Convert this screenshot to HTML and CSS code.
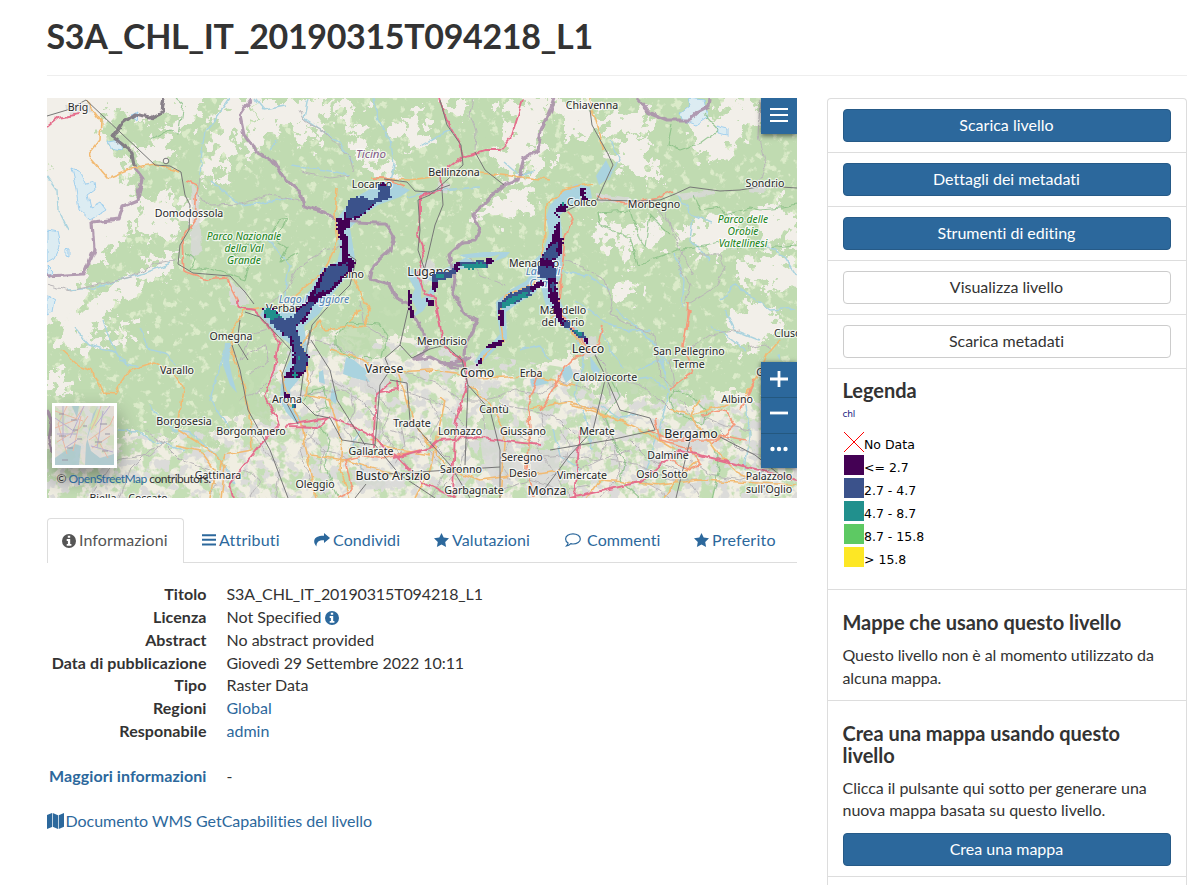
FILE: index.html
```html
<!DOCTYPE html>
<html lang="it">
<head>
<meta charset="utf-8">
<title>S3A_CHL_IT_20190315T094218_L1</title>
<link rel="stylesheet" href="styles.css">
</head>
<body>
<svg width="0" height="0" class="defs">
  <symbol id="i-info" viewBox="0 0 14 14"><path fill="currentColor" fill-rule="evenodd" d="M7 0a7 7 0 1 0 0 14A7 7 0 0 0 7 0zM5.8 1.8h2.4v2H5.8zM4.7 5h3.5v4.9h1.2v1.9H4.7V9.900h1.200V6.900H4.700z"/></symbol>
  <symbol id="i-star" viewBox="0 0 15 14"><path fill="currentColor" d="M7.500 0l2.200 4.600 5.300.7-3.800 3.600.9 5.100-4.600-2.500L2.900 14l.9-5.100L0 5.300l5.300-.7z"/></symbol>
</svg>
<div class="page">
  <h2 class="title">S3A_CHL_IT_20190315T094218_L1</h2>
  <div class="columns">
    <main class="main">
      <div class="map">
        <svg class="map-canvas" viewBox="47 98 750 400" width="750" height="400">
          <defs>
            <filter id="rough" x="-10%" y="-10%" width="120%" height="120%" color-interpolation-filters="sRGB"><feTurbulence type="fractalNoise" baseFrequency=".08" numOctaves="4" seed="4"/><feDisplacementMap in="SourceGraphic" scale="44" xChannelSelector="R" yChannelSelector="G"/></filter>
            <filter id="wiggle" filterUnits="userSpaceOnUse" x="40" y="90" width="765" height="415" color-interpolation-filters="sRGB"><feTurbulence type="fractalNoise" baseFrequency=".1" numOctaves="2" seed="9"/><feDisplacementMap in="SourceGraphic" scale="6" xChannelSelector="R" yChannelSelector="G"/></filter>
            <filter id="patches" x="0" y="0" width="100%" height="100%" color-interpolation-filters="sRGB"><feTurbulence type="fractalNoise" baseFrequency=".07" numOctaves="4" seed="12"/><feColorMatrix values="0 0 0 0 .77  0 0 0 0 .87  0 0 0 0 .71  10 0 0 0 -4.700"/><feComposite in2="SourceGraphic" operator="in"/></filter>
            <filter id="towns" x="0" y="0" width="100%" height="100%" color-interpolation-filters="sRGB"><feTurbulence type="fractalNoise" baseFrequency=".1" numOctaves="3" seed="31"/><feColorMatrix values="0 0 0 0 .86  0 0 0 0 .86  0 0 0 0 .85  12 0 0 0 -6.400"/><feComposite in2="SourceGraphic" operator="in"/></filter>
            <filter id="meadow" x="0" y="0" width="100%" height="100%" color-interpolation-filters="sRGB"><feTurbulence type="fractalNoise" baseFrequency=".11" numOctaves="4" seed="22"/><feColorMatrix values="0 0 0 0 .86  0 0 0 0 .92  0 0 0 0 .79  8 0 0 0 -4.700"/><feComposite in2="SourceGraphic" operator="in"/></filter>
          </defs>
          <rect x="47" y="98" width="750" height="400" fill="#c0dbb1"/>
          <rect x="47" y="98" width="750" height="400" filter="url(#meadow)"/>
          <g fill="#f2efe9" filter="url(#rough)">
            <path d="M30 80H170L163 115 145 125 120 108 104 122 108 140 122 160 132 188 105 205 90 230 65 210 48 165 30 180Z"/>
            <path d="M30 165L62 170 92 200 120 180 142 190 137 225 107 255 85 280 78 312 30 330Z"/>
            <path d="M135 150L152 135 175 145 160 165 140 168ZM165 190L182 212 179 235 150 238 140 210ZM92 295L118 280 149 262 168 255 175 268 146 285 122 298 100 312ZM172 210L195 194 205 212 190 226Z"/>
            <path d="M155 95H210L200 118 180 130 160 118ZM225 95H262L248 120 235 150 220 175 207 186 205 160 217 125ZM260 100H292L277 130 250 160 244 143Z"/>
            <path d="M285 100H330L325 125 300 130 282 120ZM342 98L360 108 358 132 338 120ZM300 130L315 138 308 150 293 142ZM350 130L370 145 368 160 351 150ZM398 113L420 115 430 140 410 148 395 135ZM355 170L380 160 400 170 380 178ZM440 100H470L460 120 448 115ZM500 100L542 98 541 130 525 160 513 182 490 170 500 150 512 130ZM470 215L495 198 530 192 533 208 508 222 485 216Z"/>
            <path d="M550 100H590L600 115 625 116 652 111 655 124 632 136 606 128 592 144 570 134ZM615 145L645 135 648 160 665 180 640 180 622 170ZM690 125L725 114 752 95 740 140 715 160 696 162ZM560 95L540 118 532 110 545 95ZM528 150L553 150 541 173 524 180ZM720 98L765 100 760 122 730 120Z"/>
            <path d="M620 238L650 215 665 226 660 250 635 245 625 270ZM680 235L700 216 725 215 750 228 738 248 700 255ZM750 210L775 204 797 220 791 248 765 242ZM735 260L775 254 797 262V292L765 290 735 275ZM725 330L750 300 780 310 771 340 743 350ZM590 215L612 220 622 245 602 248ZM618 285L637 282 635 298 616 297Z"/>
            <path d="M60 318L105 302 114 320 92 333 112 345 83 352 63 346ZM48 365L72 380 62 398 48 394ZM120 320L140 330 121 348Z"/>
          </g>
          <path d="M47 520V435L100 440 145 430 170 438 205 445 230 420 265 408 280 370 300 330 340 336 375 325 425 345 450 372 475 370 490 380 530 374 575 350 590 385 620 395 660 395 690 405 730 395 830 408V520Z" fill="#f0eee2" filter="url(#rough)"/>
          <path d="M47 450L145 435 230 425 300 330 425 345 580 370 797 410V498H47Z" filter="url(#patches)"/>
          <path d="M47 450L145 435 230 425 300 335 425 345 580 370 797 410V498H47Z" filter="url(#towns)"/>
          <g fill="#bfdbb0" opacity=".8"><path d="M225 380L255 375 280 415 247 425 215 420ZM335 335L355 325 380 325 385 352 350 356 335 347ZM310 335L340 320 380 290 420 300 420 330 375 345ZM485 395L505 405 500 450 482 430ZM575 360L650 350 690 390 650 400 600 390Z" filter="url(#rough)"/></g>
          <g fill="#dcecf2" stroke="#8fc8ee" stroke-width=".8" filter="url(#wiggle)">
            <path d="M71 168L80 172 86 184 94 182 95 190 88 195 91 207 100 202 106 210 90 220 79 210 76 190ZM47 230L57 232 60 245 54 258 47 262ZM47 265L54 272 49 278ZM107 142L120 140 123 150 110 148ZM47 295L55 300 53 312 47 315ZM130 115L138 112 136 120ZM680 113L690 105 688 98 704 100 708 118 697 125 683 120ZM716 125L728 128 728 136 717 134ZM66 248l3 1 0 8-3-1Z"/>
          </g>
          <g fill="#d9d9d8" opacity=".85" filter="url(#wiggle)">
            <path d="M66 105L90 103 93 112 70 114ZM190 180L199 195 202 250 190 260 193 210ZM230 280L246 292 250 305 230 305ZM360 360L380 362 390 380 378 398 360 390ZM418 270L430 258 438 275 425 285ZM438 180L450 185 446 194 434 192ZM465 368L478 364 482 390 464 388ZM660 430L690 428 714 440 700 453 675 449ZM350 470L380 468 395 488 360 490ZM480 430L505 430 525 470 496 490 484 462ZM530 450L560 450 560 498 530 494ZM580 340L596 336 598 355 584 358ZM596 192L640 200 640 206 596 201ZM675 194L715 190 715 194 685 199ZM750 182L768 184 762 194 749 192Z"/>
          </g>
          <g fill="#aad3df">
            <path d="M396 184L388 181 377 185 358 196 346 207 336 220 337 235 340 251 337 262 322 268 311 289 298 304 282 312 266 305 260 315 278 335 290 344 291 358 284 372 281 386 280 400 286 412 298 425 301 418 292 406 290 390 300 378 309 360 307 345 304 326 319 314 331 296 343 281 354 270 355 258 352 240 350 228 362 216 378 205 400 197 410 190Z"/>
            <path d="M606 160L612 172 606 180 599 185 596 176 603 165ZM590 187L576 184 563 192 550 205 546 217 549 233 543 252 532 262 531 273 526 281 510 290 496 302 497 315 500 334 492 343 482 351 474 362 480 365 497 347 507 339 506 312 514 306 536 292 540 282 544 299 548 312 560 324 575 335 586 345 591 348 586 336 570 322 561 303 557 285 562 272 563 250 562 232 560 215 571 205 592 198Z"/>
            <path d="M407 275L415 289 411 298 417 310 411 319 423 311 432 297 437 289 434 283 426 296 421 299 421 285 412 268ZM424 278L436 283 455 270 480 267 492 264 500 254 490 257 465 258 446 268ZM459 255L484 252 510 252 506 257 484 265Z"/>
            <path d="M225 343L231 343 229 361 232 376 237 393 230 385 223 365ZM346 357L354 360 362 367 370 371 365 375 370 382 354 378 343 374ZM319 372L323 370 325 384 319 382ZM332 388L337 395 336 404 330 400ZM530 379L541 377 549 383 532 387ZM560 370L570 365 574 376 566 383ZM590 356L600 370 597 377 591 369ZM777 355L780 354 780 360Z"/>
          </g>
          <g class="river">
            <path d="M230 98L215 120 205 132 202 150 200 175M270 150L278 140M255 98L265 110 285 106M308 98L304 118 325 132 338 142 353 163M290 165L325 170 350 175M373 98L378 120 390 140 394 165 390 180M420 147L440 135 455 128M47 176L57 190 58 210 68 230M68 290L95 288 118 280 145 273 171 263M75 328L90 345 115 352 130 365M103 320L110 340 120 360 140 367M140 327L150 350 165 353 177 365M118 430L138 431 150 440 185 450M150 405L160 420 175 430 190 432 210 450 225 465 235 485M210 180L240 205 292 198M267 240L290 265 283 300M610 140L620 160 608 180M678 196L692 215 712 222M693 220L690 240 710 260M675 253L684 282 682 306M616 310L640 330 660 350 665 375M577 336L584 365 573 395 585 415 592 450M553 430L560 455 580 470M638 370L660 360 669 390 660 430 645 470M560 270L590 277 610 290M720 300L735 285 770 310 797 308M360 430L353 445 367 480M225 350L210 400 230 430M407 198L440 190 480 187M535 170L520 176 505 163M550 360L540 345 520 350M758 240L784 256 797 276"/>
            <path d="M574 300L590 310 607 323 630 331 650 330M600 330L610 350 623 367M635 325L650 340 670 365M627 380L650 377 665 390M600 405L620 418 638 415M710 325L725 335 745 350M725 310L735 330 760 340M745 398L750 435 745 470M774 440L765 455 760 480"/>
          </g>
          <g class="minor">
            <path d="M200 178L197 196 212 205 240 204 270 195 300 201M47 285L70 291 100 284 130 277 155 264 175 261M173 440L150 450 130 470 120 498M145 430L165 445 180 460 210 470M165 442L150 455 115 460 90 498M205 470L215 485 210 498M245 470L260 480 250 498M268 330L250 335 240 360 265 345 268 360 250 375M285 405L300 395 340 390 360 400 380 420 380 450M300 350L315 340 335 345 355 355M315 370L305 390 320 410 315 430 300 450 310 480 330 498M330 380L350 390 355 410 345 430 360 450M365 380L390 410 382 430 410 470 430 480M400 390L430 400 440 420 430 440 450 460M400 370L440 385 460 400 480 400 485 430M430 398L450 410 470 430 460 470 430 498M485 400L515 390 540 395 560 380 590 390M500 405L530 410 560 420 580 440M500 430L530 440 550 465 570 498M560 400L600 410 610 430 600 460 580 470M520 460L560 455 600 460 630 450M590 430L615 440 620 475 600 498M620 380L640 385 660 400 670 410M610 395L605 365 590 350M560 258L580 266 605 280 612 302 610 315 630 325 655 335 660 375 675 388 670 360 697 344 710 335 740 330M748 348L765 345 772 350M683 250L677 265 690 285 685 304M700 255L720 255 725 270 712 290 690 303M665 210L673 235 680 250 694 275M760 100L758 135 765 165 757 185M680 400L700 430 730 440M630 440L650 460 680 470 700 498M690 460L710 475 740 480 770 470M720 430L740 450 780 460 797 440M610 460L640 465 670 480 700 480"/>
            <path d="M390 430L420 440 445 470 430 498M500 490L530 480 560 490 590 485M700 415L725 425 750 430M300 110L305 120 325 132 350 158 354 173M350 175L330 178 300 172M505 285L480 275 470 258M360 300L365 325 390 340M650 200L670 225 680 240M345 245L325 250 300 265 285 290 266 310M473 98L470 115 476 132 475 150M240 400L260 390 275 375M250 430L265 450 280 470 275 498M320 450L340 455 365 470M400 420L405 445 395 465M510 440L500 460 510 480M540 410L545 430 535 445M640 480L660 490 670 498M560 430L570 445 560 470 545 480M305 432L325 450 320 470"/>
          </g>
          <g class="green"><path d="M185 252L195 260 190 270 208 268 230 275 245 280 250 262 235 255 245 245 268 240 279 220 287 218 275 240 287 248 280 262 298 252M150 140L170 130 178 135 183 105 175 98M672 125L668 145 680 150 700 143 718 130 705 115M598 212L600 225 630 238 638 265 650 260 678 250 720 242M598 212L630 210 640 240 645 247 650 215 670 235M694 195L700 210 720 207 725 215 750 208 760 210 782 208 797 205M730 248L765 248 797 245M335 337L350 322 380 324 387 335 382 357 350 358 335 345ZM303 400L313 390 323 388 328 408 313 412M318 425L330 440 325 465 338 498M613 382L620 395 605 415 613 440 625 460 620 480 640 498M669 400L675 390 690 395 705 410 702 425 675 412ZM715 450L720 470 712 498"/></g>
          <g class="border">
            <path d="M134 167L142 178 138 200 123 206 119 219 92 222 94 250 84 274 47 276M252 98L240 116 244 135 257 152 275 163 285 180 300 192 304 206 325 212 337 221 375 223 386 223 394 237 390 250 373 265 370 279 389 285 396 298 407 303 415 318 423 332 428 348 415 360 430 357 442 363 455 362 470 357 461 365 448 363 452 368 459 368M459 300L452 295 455 280 449 255 463 242 475 241 480 228 474 213 505 184 518 180 524 158 538 151 541 130 550 110 554 98M636 98L650 113 667 120 690 120 697 113 709 107 710 98M459 300L464 315 477 320 472 334 465 343 464 357M47 410L52 422 49 440 53 455"/>
            <path class="ridge" d="M164 98L162 112 150 118 134 115 123 123 113 137 132 152 134 167"/>
          </g>
          <g class="road">
            <path d="M86 100L101 120 100 140 88 155 108 178 130 169 155 165 180 172M371 178L410 180 470 172 550 180M61 350L78 365 92 370 102 392 115 393 130 370 155 362 170 370 183 388 178 430 205 447 225 465 221 498M263 307L245 310 232 330 230 347 240 375 250 415 252 450 225 455 220 470M337 187L335 215 338 240 325 270 292 298 268 312M346 260L362 297 370 310 365 325 325 330 320 320 302 345 308 375 305 395 330 400 342 440 340 470 350 498M330 350L360 358 370 365 398 372 430 370 480 378 530 376 575 385M398 372L415 425 450 470 480 480 560 470M470 386L490 405 505 430 500 498M550 320L560 310 571 330 589 352M585 500L600 480 660 485 700 480 797 485M571 405L620 420 650 435 675 450M780 340L767 355 756 380 740 400 690 415 670 409M480 362L487 353 503 340 500 312 505 297 535 283 544 248 546 205 565 190 592 183M360 310L350 322M280 370L290 405 302 425 315 498M175 445L200 450 215 470 210 498M700 400L690 415 715 450 740 475 760 480M530 408L570 402 595 410 630 425M700 460L680 475 665 498M440 398L445 402 430 470 415 498M370 440L400 450 430 455M590 98L592 110 604 150M310 455L345 460 395 475"/>
          </g>
          <g class="trunk"><path d="M186 180L197 185 195 220 182 240 184 272 207 280 227 278 238 300 238 307M373 178L385 178 405 186M567 212L573 218 565 238 562 270 558 310 590 350 575 358 565 368 550 395 540 410M597 196L625 204 650 200 673 192M690 310L683 345 694 372 670 390M689 302L687 330M540 370L528 405 530 430 527 470 535 498M648 430L670 440 715 440 720 435 745 440M655 418L660 440 690 448 700 465 690 470 670 460M338 498L352 490 345 460 365 455 385 458 420 450M700 415L725 410 735 425 712 445M740 410L755 380M603 325L598 345 590 350"/></g>
          <g class="motorway"><path d="M47 127L58 118 80 114M439 98L447 120 460 143 463 157 440 175 442 190 420 197 420 215 418 235 424 255 418 275 425 295 435 298 441 330 445 347 465 363 467 385 455 425 453 498M463 157L485 150 500 150 512 135 523 100M238 300L239 307 254 310 268 325 279 342 275 370 264 396 280 425 260 445 240 470 230 485 233 498M290 427L316 428 330 416 370 435 395 455 420 480 455 498M285 426L327 418M390 383L376 395 373 450M380 393L398 390 397 380M393 458L430 448 440 440 480 437M570 498L640 482 680 450 740 465 797 480M580 430L575 498M540 445L480 438"/></g>
          <g class="rail">
            <path d="M47 116L67 110 86 100 155 165 170 166 181 172 185 195 190 205 189 230 180 245 178 264 193 273 230 276 245 292 254 304"/>
            <circle cx="166" cy="161" r="2.800"/>
            <path d="M384 179L407 182 415 191 430 192 450 185M442 190L443 205 435 225 428 255 423 275M440 100L447 125 461 145 463 165 447 180 430 195 418 200 420 230 418 250 424 268M475 152L485 170 504 185M347 254L356 260 350 285 325 310 312 325 308 345M311 340L330 370 337 400 365 445M310 330L305 360 300 400 315 415 330 418 342 440 375 445M385 358L400 345 412 358 430 349 445 345 462 360 468 385 490 410 500 450 500 498M400 345L408 310M385 358L390 370 380 385 375 445 400 475 435 498M390 380L407 383 410 420 450 465 470 498M468 385L465 465M370 475L450 470 500 467M366 484L355 498M232 345L240 370 248 410 270 450 288 498M595 355L605 375 620 410 650 418 655 430 610 440 550 450M605 380L593 430 570 455 540 495M676 498L690 440M720 437L755 455 780 475M564 212L582 203 597 200 640 201 660 200 675 194 690 187 720 191 740 190 765 186 797 188M590 110L592 125 608 154 613 165 597 200M240 320L237 342 248 360M245 312L260 317 277 335 291 350 282 375 285 400 298 424"/>
          </g>
          <g class="labels">
            <g class="water"><text x="314" y="303">Lago Maggiore</text><text x="543" y="275">Lago di</text><text x="543" y="287">Como</text></g>
            <text class="region" x="371" y="158">Ticino</text>
            <g class="park"><text x="244" y="240">Parco Nazionale</text><text x="244" y="252">della Val</text><text x="244" y="264">Grande</text><text x="743" y="223">Parco delle</text><text x="743" y="235">Orobie</text><text x="743" y="247">Valtellinesi</text></g>
            <g class="town">
              <text x="78" y="111">Brig</text><text x="592" y="109">Chiavenna</text><text x="189" y="217">Domodossola</text><text x="454" y="176">Bellinzona</text><text x="372" y="188">Locarno</text><text x="765" y="187">Sondrio</text><text x="654" y="208">Morbegno</text><text x="582" y="206">Colico</text><text x="534" y="267">Menaggio</text><text x="350" y="278">Luino</text><text x="288" y="312">Verbania</text><text x="231" y="340">Omegna</text><text x="177" y="374">Varallo</text><text x="184" y="425">Borgosesia</text><text x="251" y="435">Borgomanero</text><text x="287" y="403">Arona</text><text x="218" y="479">Gattinara</text><text x="103" y="502">Biella</text><text x="148" y="502">Cossato</text><text x="442" y="345">Mendrisio</text><text x="563" y="314">Mandello</text><text x="563" y="326">del Lario</text><text x="689" y="355">San Pellegrino</text><text x="689" y="368">Terme</text><text x="605" y="381">Calolziocorte</text><text x="531" y="377">Erba</text><text x="494" y="413">Cantù</text><text x="412" y="427">Tradate</text><text x="460" y="435">Lomazzo</text><text x="523" y="435">Giussano</text><text x="597" y="435">Merate</text><text x="371" y="455">Gallarate</text><text x="522" y="461">Seregno</text><text x="461" y="473">Saronno</text><text x="523" y="477">Desio</text><text x="582" y="479">Vimercate</text><text x="315" y="488">Oleggio</text><text x="474" y="494">Garbagnate</text><text x="737" y="403">Albino</text><text x="668" y="459">Dalmine</text><text x="662" y="478">Osio Sotto</text><text x="769" y="480">Palazzolo</text><text x="769" y="493">sull'Oglio</text><text x="794" y="337">Clusone</text><text x="782" y="376">Gazzaniga</text>
            </g>
            <g class="city"><text x="429" y="276">Lugano</text><text x="384" y="373">Varese</text><text x="477" y="377">Como</text><text x="588" y="353">Lecco</text><text x="691" y="438">Bergamo</text><text x="393" y="480">Busto Arsizio</text><text x="547" y="495">Monza</text></g>
          </g>
          <g id="raster" shape-rendering="crispEdges"></g>
        </svg>
        <button class="map-btn menu" aria-label="Menu"><svg width="18" height="14"><path d="M0 1h18M0 7h18M0 13h18" stroke="#fff" stroke-width="2"/></svg></button>
        <div class="zoom">
          <button class="map-btn" aria-label="Zoom in"><svg width="18" height="18"><path d="M0 9h18M9 1v16" stroke="#fff" stroke-width="2.800"/></svg></button>
          <button class="map-btn" aria-label="Zoom out"><svg width="18" height="18"><path d="M0 9h18" stroke="#fff" stroke-width="2.800"/></svg></button>
          <button class="map-btn" aria-label="Altro"><svg width="18" height="6" fill="#fff"><circle cx="2.500" cy="3" r="2.200"/><circle cx="9" cy="3" r="2.200"/><circle cx="15.500" cy="3" r="2.200"/></svg></button>
        </div>
        <div class="thumb">
          <svg width="59" height="59" viewBox="0 0 59 59">
            <rect width="59" height="59" fill="#e3dcd5"/>
            <rect width="59" height="59" filter="url(#patches)" opacity=".6"/>
            <rect width="59" height="59" filter="url(#towns)"/>
            <path d="M59 48L45 52 36 45 32 32 38 8 43 0 41 5 34 27 31 38 30 59H59ZM0 52L20 38 26 40 24 59H0ZM17 0L24 0 22 12Z" fill="#a9c8ce" opacity=".85"/>
            <path d="M38 24L46 8 43 3 35 20Z" fill="#d4dfad"/>
            <path d="M0 22L20 14 28 2M2 36L25 22 33 10M12 0L3 18 12 48M26 10L18 45M34 34L55 19 59 10M37 42L55 30M40 29L53 52M0 5L28 15M36 24L42 12 46 0" fill="none" stroke="#e9b8a3"/>
            <path d="M0 12L20 26M8 0V35M29 0L15 32M48 5L42 42M55 0L40 20M2 28H22M36 40L58 46M10 42L22 34" fill="none" stroke="#b9afd0"/>
            <path d="M4 8h5M16 14h6M4 30h7M18 24h5M45 18h7M40 36h7M12 42h6M47 45h6M7 54h6M28 20h4M50 28h5M22 33h5" stroke="#9995a4"/>
          </svg>
        </div>
        <div class="attribution">© <a>OpenStreetMap</a> contributors.</div>
      </div>
      <nav class="tabs">
        <a class="tab active"><svg class="ic" width="14" height="14"><use href="#i-info"/></svg>Informazioni</a>
        <a class="tab t2"><svg class="ic" width="14" height="12"><path d="M0 1.200h14M0 5.800h14M0 10.400h14" stroke="currentColor" stroke-width="2"/></svg>Attributi</a>
        <a class="tab t3"><svg class="ic" width="16" height="14" viewBox="0 0 16 14"><path fill="currentColor" d="M10 0l6 5-6 5V7.200C5.500 7 2.500 8.200 2.400 13.500 1 11.500 0 10 .2 8 .6 4.200 4.500 2.700 10 2.800z"/></svg>Condividi</a>
        <a class="tab t4"><svg class="ic" width="15" height="14"><use href="#i-star"/></svg>Valutazioni</a>
        <a class="tab t5"><svg class="ic" width="16" height="14" viewBox="0 0 16 14"><path fill="none" stroke="currentColor" stroke-width="1.200" d="M8 .9c4.100 0 7.300 2.200 7.300 5S12.100 11 8 11c-.8 0-1.500-.1-2.200-.3C4.600 12 3.200 12.900 1.500 13c.9-.9 1.500-1.800 1.600-3C1.500 9 .6 7.600.6 5.900.6 3.100 3.900.9 8 .9z"/></svg>Commenti</a>
        <a class="tab t6"><svg class="ic" width="15" height="14"><use href="#i-star"/></svg>Preferito</a>
      </nav>
      <dl class="info">
        <dt>Titolo</dt><dd class="name">S3A_CHL_IT_20190315T094218_L1</dd>
        <dt>Licenza</dt><dd>Not Specified <a><svg class="ic" width="14" height="14"><use href="#i-info"/></svg></a></dd>
        <dt>Abstract</dt><dd>No abstract provided</dd>
        <dt>Data di pubblicazione</dt><dd class="date">Giovedì 29 Settembre 2022 10:11</dd>
        <dt>Tipo</dt><dd>Raster Data</dd>
        <dt>Regioni</dt><dd><a>Global</a></dd>
        <dt>Responabile</dt><dd><a>admin</a></dd>
      </dl>
      <dl class="info more"><dt><a>Maggiori informazioni</a></dt><dd>-</dd></dl>
      <a class="wms"><svg width="17" height="16" viewBox="0 0 17 16"><path fill="currentColor" d="M0 2L5 0V14L0 16ZM5.700 0L11 2.200V16L5.700 13.800ZM11.700 2.200L17 0V13.800L11.700 16Z"/></svg>Documento WMS GetCapabilities del livello</a>
    </main>
    <aside class="side">
      <section class="item"><button class="btn primary">Scarica livello</button></section>
      <section class="item"><button class="btn primary">Dettagli dei metadati</button></section>
      <section class="item"><button class="btn primary">Strumenti di editing</button></section>
      <section class="item"><button class="btn">Visualizza livello</button></section>
      <section class="item"><button class="btn">Scarica metadati</button></section>
      <section class="item legend">
        <h4>Legenda</h4>
        <p class="layer">chl</p>
        <ul>
          <li><svg width="20" height="20"><path d="M0 0L20 20M20 0L0 20" stroke="red"/></svg><span>No Data</span></li>
          <li><i class="sw c1"></i><span>&lt;= 2.7</span></li>
          <li><i class="sw c2"></i><span>2.7 - 4.7</span></li>
          <li><i class="sw c3"></i><span>4.7 - 8.7</span></li>
          <li><i class="sw c4"></i><span>8.7 - 15.8</span></li>
          <li><i class="sw c5"></i><span>&gt; 15.8</span></li>
        </ul>
      </section>
      <section class="item uses"><h4>Mappe che usano questo livello</h4><p>Questo livello non è al momento utilizzato da alcuna mappa.</p></section>
      <section class="item create"><h4>Crea una mappa usando questo livello</h4><p>Clicca il pulsante qui sotto per generare una nuova mappa basata su questo livello.</p><button class="btn primary">Crea una mappa</button></section>
      <section class="item tail"></section>
    </aside>
  </div>
</div>
<script src="raster.js"></script>
</body>
</html>
```
FILE: styles.css
```css
* { box-sizing: border-box; }
body { margin: 0; background: #fff; color: #333; font: 16px/22.86px Lato, "Open Sans", sans-serif; font-variant-ligatures: none; height: 885px; overflow: hidden; }
a { color: #2c689c; text-decoration: none; }
h2, h4, p, dl, dd, ul { margin: 0; padding: 0; }
.defs { position: absolute; }
.page { width: 1140px; margin-left: 46.500px; }
.title { height: 76px; padding-top: 17px; border-bottom: 1px solid #eee; font-size: 34px; line-height: 38px; font-weight: 700; letter-spacing: -.34px; }
.columns { display: flex; gap: 30px; padding-top: 22px; align-items: flex-start; }
.main { width: 750px; }
.map { position: relative; height: 400px; overflow: hidden; }
.map-canvas { display: block; }
.map-btn { display: flex; align-items: center; justify-content: center; width: 36px; height: 35px; padding: 0 0 2px; border: 0; background: #2c689c; }
.menu { position: absolute; top: 0; right: 0; height: 36px; box-shadow: 0 2px 5px #0008; }
.zoom { position: absolute; top: 264px; right: 0; box-shadow: 0 1px 5px #0009; }
.zoom .map-btn { height: 35.330px; }
.zoom .map-btn + .map-btn { border-top: 1px solid #24587f; padding-bottom: 4px; }
.thumb { position: absolute; left: 5px; top: 305px; border: 3px solid #fff; width: 65px; height: 65px; box-shadow: 0 10px 20px #0006; }
.thumb svg { display: block; }
.attribution { position: absolute; left: 10px; top: 373px; font-size: 12px; line-height: 16px; letter-spacing: -.48px; }

.river, .minor, .green, .border, .road, .trunk, .motorway, .rail { fill: none; stroke-linejoin: round; filter: url(#wiggle); }
.river { stroke: #aad3df; stroke-width: 1.400; }
.minor { stroke: #b9b6b8; stroke-width: 1; }
.green { stroke: #83bd80; stroke-width: 1.200; opacity: .75; }
.border { stroke: #ac92ac; stroke-width: 3.200; opacity: .9; }
.ridge { stroke: #7d747f; }
.road { stroke: #f2ba72; stroke-width: 1.600; }
.trunk { stroke: #f59a7b; stroke-width: 1.700; }
.motorway { stroke: #e56f8d; stroke-width: 1.900; }
.rail { stroke: #777; stroke-width: 1; filter: none; }
.labels { font-family: "Noto Sans", sans-serif; font-size: 11px; text-anchor: middle; fill: #282828; stroke: #ffffffb8; stroke-width: 2.400px; paint-order: stroke; stroke-linejoin: round; }
.town { font-size: 10.600px; }
.city { font-size: 12.300px; }
.park { font-size: 10.300px; font-style: italic; fill: #168216; }
.region { font-size: 11.500px; font-style: italic; fill: #825a87; }
.water { font-style: italic; fill: #4d80b3; font-size: 10.500px; }

.tabs { display: flex; height: 45px; margin-top: 20px; border-bottom: 1px solid #ddd; }
.tab { display: flex; align-items: center; height: 45px; white-space: nowrap; padding-bottom: 1px; letter-spacing: .1px; }
.tab .ic { margin-right: 3px; flex: none; }
.active { width: 137px; padding-left: 14.500px; border: 1px solid #ddd; border-bottom: 0; border-radius: 4px 4px 0 0; background: #fff; color: #555; }
.t2 { width: 112px; padding-left: 18.500px; letter-spacing: .2px; }
.t3 { width: 120px; padding-left: 18.500px; }
.t4 { width: 131px; padding-left: 18.500px; }
.t5 { width: 129px; padding-left: 18.500px; }
.tab.t5 .ic { margin-right: 6px; }
.t6 { padding-left: 18.500px; letter-spacing: .25px; }
.info { display: grid; grid-template-columns: 160px 1fr; column-gap: 20px; margin-top: 20px; }
dt { font-weight: 700; text-align: right; white-space: nowrap; letter-spacing: .07px; }
.name { letter-spacing: -.13px; }
.date { letter-spacing: -.07px; }
.info .ic { vertical-align: -2px; margin-left: -1px; }
.more { margin-top: 22px; }
.wms { display: flex; align-items: center; gap: 2px; margin-top: 22px; letter-spacing: -.03px; }

.side { width: 360px; border: 1px solid #ddd; border-bottom: 0; border-radius: 4px 4px 0 0; }
.item { padding: 10px 15px; border-bottom: 1px solid #ddd; }
.btn { display: block; width: 100%; height: 33px; padding: 0 0 2px; border: 1px solid #ccc; border-radius: 4px; background: #fff; color: #333; font: 16px Lato, sans-serif; font-variant-ligatures: none; }
.primary { background: #2c689c; border-color: #265a87; color: #fff; }
h4 { font-size: 20px; line-height: 22px; font-weight: 700; letter-spacing: -.03px; }
.legend { height: 221px; }
.layer { font: 9px/12px "DejaVu Sans", sans-serif; color: #1a1a80; margin-top: 7px; letter-spacing: -.2px; }
.legend ul { list-style: none; margin: 12px 0 0 1.500px; }
.legend li { display: flex; height: 23px; font: 12.500px/25px "DejaVu Sans", sans-serif; color: #000; }
.legend svg, .sw { width: 20px; height: 20px; }
.c1 { background: #440154; } .c2 { background: #3b528b; } .c3 { background: #21908d; } .c4 { background: #5dc963; } .c5 { background: #fde725; }
.uses { height: 111px; padding-top: 21px; }
.uses p, .create p { margin-top: 11px; line-height: 22.860px; letter-spacing: -.1px; }
.create { height: 176px; padding-top: 21px; }
.create p { line-height: 22px; letter-spacing: -.03px; }
.create .btn { margin-top: 12px; }
.tail { height: 8px; padding: 0; border: 0; }
```
FILE: raster.js
```js
// Chlorophyll cells. Each tile holds polygons in thirds of a pixel from its
// origin; the class of the last polygon that covers a cell wins.
const colors = ['', '#440154', '#3b528b', '#21908d'];
const tiles = [
  { ox: 260, oy: 175, shapes: [
    [1, '230,130 250,132 262,100 270,72 310,68 330,75 355,65 358,30 372,25 380,38 392,38 392,68 360,72 345,88 320,108 300,128 272,134 268,158 250,165 262,190 268,250 284,262 280,278 262,300 240,322 215,350 185,367 158,395 135,438 108,452 115,480 128,520 145,545 138,582 120,610 75,608 78,595 100,570 98,530 90,490 70,480 50,460 30,435 12,425 10,400 40,400 65,420 70,440 95,430 120,390 140,380 160,340 180,300 210,270 245,258 245,200 235,180 230,155'],
    [2, '258,108 268,68 310,64 330,75 355,65 356,28 392,38 392,68 345,84 310,114 280,129 256,132'],
    [2, '200,278 263,263 262,290 235,315 207,345 180,352 163,362 188,310'],
    [2, '75,430 95,428 125,395 155,378 170,375 152,400 130,435 108,450 113,475 128,520 144,550 130,590 95,592 107,560 104,520 97,490 75,480 50,462 26,440 40,426'],
    [3, '10,400 38,402 64,425 40,434 15,425'], [3, '95,596 113,596 113,608 95,608'],
    [3, '110,545 120,545 120,555 110,555'],
    [1, '72,655 90,655 90,670 72,668'], [2, '92,685 110,685 110,700 95,700'], [3, '97,690 104,690 104,698 97,698']
  ] },
  { ox: 460, oy: 180, shapes: [
    [1, '285,140 298,125 302,165 310,185 305,215 292,235 277,245 284,265 290,290 290,320 294,340 300,370 307,410 320,425 312,440 292,420 280,380 266,345 265,300 238,292 236,265 245,225 260,205 275,180'],
    [2, '258,210 294,185 291,232 245,242'], [2, '236,256 286,264 290,292 250,296 234,280'],
    [2, '272,305 284,310 286,340 274,335'], [2, '306,422 327,426 337,448 318,446'],
    [2, '333,444 372,458 376,477 352,470'], [3, '342,450 366,458 362,470'],
    [1, '372,475 384,478 384,491 372,486'], [1, '360,25 376,25 374,50 366,58 362,40'],
    [1, '290,82 320,68 320,92 290,98'], [1, '282,98 298,98 295,117'], [3, '303,68 319,68 316,82'],
    [2, '116,370 150,343 200,318 224,318 212,347 170,366 130,378 118,400'],
    [3, '120,372 160,350 202,333 204,350 165,366 128,388'],
    [1, '208,325 247,298 252,312 220,337'],
    [1, '116,390 132,392 130,440 119,436'], [1, '80,495 130,480 130,496 80,504'],
    [1, '48,550 70,530 66,552 50,556'], [1, '368,50 384,52 384,60 368,58']
  ] },
  { ox: 290, oy: 95, shapes: [
    [1, '425,540 445,540 448,560 438,590 428,588'],
    [2, '422,536 480,530 500,510 500,528 480,548 430,562'], [3, '440,538 462,540 456,550 438,550'],
    [2, '505,502 595,498 590,518 510,514'], [3, '510,508 590,504 585,518 540,520 512,512'],
    [1, '590,490 609,490 607,503 590,505'], [1, '494,503 508,503 506,526 494,526'],
    [1, '354,585 365,597 362,628 354,620'], [1, '355,620 366,640 376,664 366,674 358,650'],
    [1, '412,612 430,615 432,636 416,634']
  ] }
];
const layer = document.getElementById('raster');
const cell = 2;
const noise = (x, y) => { const v = Math.sin(x * 12.99 + y * 78.23) * 43758.5; return v - Math.floor(v); };
const inside = (px, py, pts) => {
  let hit = false;
  for (let i = 0, j = pts.length - 1; i < pts.length; j = i++) {
    const [xi, yi] = pts[i], [xj, yj] = pts[j];
    if ((yi > py) !== (yj > py) && px < (xj - xi) * (py - yi) / (yj - yi) + xi) hit = !hit;
  }
  return hit;
};
const cells = new Map();
for (const { ox, oy, shapes } of tiles)
  for (const [c, text] of shapes) {
    const pts = text.split(' ').map(p => p.split(',').map(Number)).map(([x, y]) => [ox + x / 3, oy + y / 3]);
    const xs = pts.map(p => p[0]), ys = pts.map(p => p[1]);
    for (let y = Math.floor(Math.min(...ys) / cell) * cell - cell; y <= Math.max(...ys) + cell; y += cell)
      for (let x = Math.floor(Math.min(...xs) / cell) * cell - cell; x <= Math.max(...xs) + cell; x += cell) {
        const jx = (noise(x, y) - 0.5) * 1.8, jy = (noise(y, x) - 0.5) * 1.8;
        if (inside(x + 1 + jx, y + 1 + jy, pts)) cells.set(x + ',' + y, c);
      }
  }
for (const [key, c] of cells) {
  const [x, y] = key.split(',');
  const rect = document.createElementNS('http://www.w3.org/2000/svg', 'rect');
  rect.setAttribute('x', x);
  rect.setAttribute('y', y);
  rect.setAttribute('width', cell);
  rect.setAttribute('height', cell);
  rect.setAttribute('fill', colors[c]);
  layer.appendChild(rect);
}
```
